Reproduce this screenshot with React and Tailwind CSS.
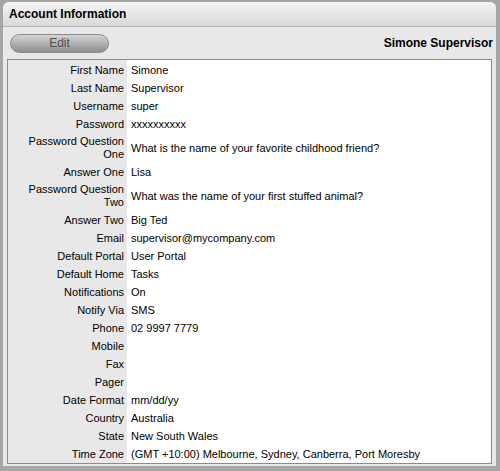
import React from 'react';

const rows = [
  ['First Name', 'Simone'],
  ['Last Name', 'Supervisor'],
  ['Username', 'super'],
  ['Password', 'xxxxxxxxxx'],
  [['Password Question', 'One'], 'What is the name of your favorite childhood friend?'],
  ['Answer One', 'Lisa'],
  [['Password Question', 'Two'], 'What was the name of your first stuffed animal?'],
  ['Answer Two', 'Big Ted'],
  ['Email', 'supervisor@mycompany.com'],
  ['Default Portal', 'User Portal'],
  ['Default Home', 'Tasks'],
  ['Notifications', 'On'],
  ['Notify Via', 'SMS'],
  ['Phone', '02 9997 7779'],
  ['Mobile', ''],
  ['Fax', ''],
  ['Pager', ''],
  ['Date Format', 'mm/dd/yy'],
  ['Country', 'Australia'],
  ['State', 'New South Wales'],
  ['Time Zone', '(GMT +10:00) Melbourne, Sydney, Canberra, Port Moresby'],
];

export default function App() {
  return (
    <div className="w-[500px] h-[471px] bg-[#a6a6a6] pl-[3px] pr-[4px] pt-[2px] pb-[5px] font-['Liberation_Sans',Arial,sans-serif] text-black">
      <div className="h-full flex flex-col bg-[#e8e8e8] rounded-t-[6px] overflow-hidden">
        {/* Header */}
        <div className="h-[25px] shrink-0 flex items-center px-[6px] bg-gradient-to-b from-[#f4f4f4] to-[#d9d9d9] border-b border-[#b4b4b4]">
          <span className="text-[12px] font-bold">Account Information</span>
        </div>

        {/* Toolbar */}
        <div className="h-[32px] shrink-0 flex items-center justify-between pl-[7px] pr-[3px]">
          <button className="w-[99px] h-[19px] rounded-full border border-[#8c8c8c] bg-gradient-to-b from-[#d4d4d4] to-[#8f8f8f] text-[12px] text-[#505050] leading-none">
            Edit
          </button>
          <span className="text-[12px] font-bold">Simone Supervisor</span>
        </div>

        {/* Details table */}
        <div className="flex-1 mx-[4px] mb-[3px] border border-[#8a8a8a] pt-[1px] bg-[linear-gradient(to_right,#e8e8e8_119px,#ffffff_119px)]">
          {rows.map(([label, value], i) => (
            <div key={i} className="flex items-center text-[11px]">
              <div className="w-[119px] shrink-0 text-right pr-[3px] py-[2px]">
                {Array.isArray(label) ? (
                  <div className="leading-[13px]">
                    <div>{label[0]}</div>
                    <div>{label[1]}</div>
                  </div>
                ) : (
                  <div className="leading-[14px]">{label}</div>
                )}
              </div>
              <div className="pl-[4px] leading-[14px] whitespace-nowrap">{value}</div>
            </div>
          ))}
        </div>
      </div>
    </div>
  );
}
